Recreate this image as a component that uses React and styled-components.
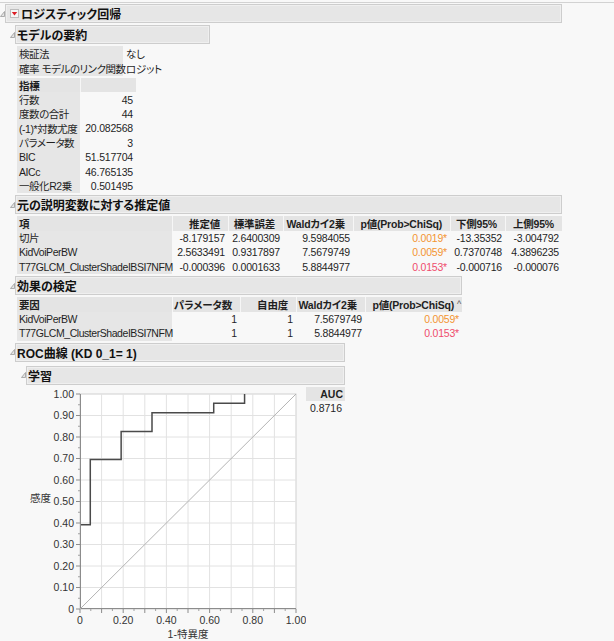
import React from 'react'
import styled, { createGlobalStyle } from 'styled-components'

const GlobalStyle = createGlobalStyle`
  body {
    margin: 0;
    background: #f8f8f8;
    font-family: "Liberation Sans", "Noto Sans CJK JP", sans-serif;
    font-feature-settings: "palt" 1;
    color: #1f1f1f;
  }
`

const Page = styled.div`
  padding-top: 2px;
  width: 614px;
  height: 641px;
  box-sizing: border-box;
  overflow: hidden;
`

const Rule = styled.div`
  height: 1px;
  background: #d2d2d2;
  margin-bottom: 1px;
`

const Node = styled.div`
  display: flex;
  flex-direction: column;
  gap: 2px;
  margin-top: ${p => p.$top || 0}px;
`

const Head = styled.div`
  display: flex;
  align-items: center;
`

const TitleBox = styled.div`
  box-sizing: border-box;
  width: ${p => p.$w}px;
  height: 19px;
  background: #e6e6e6;
  border: 1px solid #cdcdcd;
  box-shadow: inset 0 0 0 1px #efefef;
  display: flex;
  align-items: center;
  gap: 2px;
  padding-left: ${p => p.$pad ?? 1}px;
  font-size: 12px;
  font-weight: bold;
  color: #111;
  white-space: nowrap;
`

const Body = styled.div`
  display: flex;
  flex-direction: column;
  gap: 2px;
  padding-left: ${p => p.$indent}px;
`

const Grid = styled.div`
  display: grid;
  grid-template-columns: ${p => p.$cols};
  grid-auto-rows: ${p => p.$row}px;
  width: max-content;
  font-size: 10.5px;
  letter-spacing: -0.2px;
`

const Cell = styled.div`
  display: flex;
  align-items: center;
  white-space: nowrap;
  box-sizing: border-box;
  justify-content: ${p => (p.$right ? 'flex-end' : 'flex-start')};
  padding: ${p => (p.$right ? '0 3px 0 0' : '0 0 0 2px')};
  color: ${p => p.$color || 'inherit'};
`

const ValueCell = styled(Cell)`
  padding-left: 3px;
`

const LabelCell = styled(Cell)`
  background: #e6e6e6;
  letter-spacing: -0.45px;
`

const HeadCell = styled(Cell)`
  background: #e4e4e4;
  font-weight: bold;
  padding: ${p => (p.$right ? `0 ${p.$pr ?? 8}px 0 0` : '0 0 0 2px')};
  border-left: ${p => (p.$first ? 'none' : '1px solid #f6f6f6')};
`

const Caret = styled.span`
  font-weight: normal;
  font-size: 9px;
  margin-left: 3px;
  color: #555;
`

const ChartRow = styled.div`
  display: flex;
  align-items: flex-start;
`

const AucTable = styled.div`
  display: grid;
  grid-template-columns: 39px;
  grid-auto-rows: 14px;
  font-size: 10.5px;
`

const Toggle = () => (
  <svg width="5" height="6" viewBox="0 0 5 6">
    <polygon points="4.5,0.5 4.5,5.5 0.5,5.5" fill="#e4e4e4" stroke="#9a9a9a" strokeWidth="0.8" />
  </svg>
)

const MenuIcon = () => (
  <svg width="9" height="9" viewBox="0 0 9 9">
    <rect x="0.5" y="0.5" width="8" height="8" fill="#f6f6f6" stroke="#bdbdbd" />
    <polygon points="1.8,3 7.2,3 4.5,6.4" fill="#dc1e26" />
  </svg>
)

const ORANGE = '#f39532'
const RED = '#ef4d6d'

const summary = [
  ['行数', '45'],
  ['度数の合計', '44'],
  ['(-1)*対数尤度', '20.082568'],
  ['パラメータ数', '3'],
  ['BIC', '51.517704'],
  ['AICc', '46.765135'],
  ['一般化R2乗', '0.501495'],
]

const estimates = [
  ['切片', '-8.179157', '2.6400309', '9.5984055', '0.0019*', ORANGE, '-13.35352', '-3.004792'],
  ['KidVoiPerBW', '2.5633491', '0.9317897', '7.5679749', '0.0059*', ORANGE, '0.7370748', '4.3896235'],
  ['T77GLCM_ClusterShadeIBSI7NFM', '-0.000396', '0.0001633', '5.8844977', '0.0153*', RED, '-0.000716', '-0.000076'],
]

const effects = [
  ['KidVoiPerBW', '1', '1', '7.5679749', '0.0059*', ORANGE],
  ['T77GLCM_ClusterShadeIBSI7NFM', '1', '1', '5.8844977', '0.0153*', RED],
]

// ROC chart geometry (svg coords)
const L = 54
const T = 7
const W = 216
const H = 215
const px = v => L + v * W
const py = v => T + (1 - v) * H

const roc = [
  [0, 9 / 23], [1 / 21, 9 / 23], [1 / 21, 16 / 23], [4 / 21, 16 / 23],
  [4 / 21, 19 / 23], [7 / 21, 19 / 23], [7 / 21, 21 / 23], [13 / 21, 21 / 23],
  [13 / 21, 22 / 23], [16 / 21, 22 / 23], [16 / 21, 1],
]

const RocChart = () => {
  const tens = Array.from({ length: 11 }, (_, i) => i / 10)
  const halves = Array.from({ length: 10 }, (_, i) => i / 10 + 0.05)
  const lbl = v => (v === 0 ? '0' : v.toFixed(2))
  return (
    <svg width="280" height="254" style={{ display: 'block' }}>
      <rect x={L} y={T} width={W} height={H} fill="#fff" stroke="#cfcfcf" />
      {tens.slice(1, 10).map(v => (
        <g key={v} stroke="#e2e2e2" strokeWidth="1">
          <line x1={px(v)} y1={T} x2={px(v)} y2={T + H} />
          <line x1={L} y1={py(v)} x2={L + W} y2={py(v)} />
        </g>
      ))}
      <line x1={L + 0.5} y1={T} x2={L + 0.5} y2={T + H} stroke="#8c8c8c" />
      <line x1={L} y1={T + H - 0.5} x2={L + W} y2={T + H - 0.5} stroke="#8c8c8c" />
      {tens.map(v => (
        <g key={'t' + v} stroke="#8c8c8c">
          <line x1={L - 4} y1={py(v)} x2={L} y2={py(v)} />
          <line x1={px(v)} y1={T + H} x2={px(v)} y2={T + H + 4} />
        </g>
      ))}
      {halves.map(v => (
        <g key={'h' + v} stroke="#a0a0a0">
          <line x1={L - 2} y1={py(v)} x2={L} y2={py(v)} />
          <line x1={px(v)} y1={T + H} x2={px(v)} y2={T + H + 2} />
        </g>
      ))}
      <line x1={px(0)} y1={py(0)} x2={px(1)} y2={py(1)} stroke="#b4b4b4" strokeWidth="1" />
      <polyline
        points={roc.map(([x, y]) => `${px(x) + (x === 0 ? 1 : 0)},${py(y)}`).join(' ')}
        fill="none"
        stroke="#4a4a4a"
        strokeWidth="1.5"
      />
      <g fontSize="10.5" fill="#333" fontFamily="Liberation Sans, sans-serif">
        {tens.map(v => (
          <text key={'y' + v} x={L - 6} y={py(v) + 3.8} textAnchor="end">{lbl(v)}</text>
        ))}
        {[0, 0.2, 0.4, 0.6, 0.8, 1].map(v => (
          <text key={'x' + v} x={px(v)} y={T + H + 15} textAnchor="middle">{lbl(v)}</text>
        ))}
      </g>
      <g fontSize="10.5" fill="#333" fontFamily="Liberation Sans, Noto Sans CJK JP, sans-serif">
        <text x="4" y="115">感度</text>
        <text x={px(0.5)} y="251" textAnchor="middle">1-特異度</text>
      </g>
    </svg>
  )
}

const App = () => (
  <Page>
    <GlobalStyle />
    <Rule />
    <Node>
      <Head>
        <Toggle />
        <TitleBox $w={557} $pad={4}>
          <MenuIcon />
          ロジスティック回帰
        </TitleBox>
      </Head>
      <Body $indent={10}>
        <Node>
          <Head>
            <Toggle />
            <TitleBox $w={195}>モデルの要約</TitleBox>
          </Head>
          <Body $indent={7}>
            <Grid $cols="106px 60px" $row={15}>
              <LabelCell>検証法</LabelCell>
              <ValueCell>なし</ValueCell>
              <LabelCell>確率 モデルのリンク関数</LabelCell>
              <ValueCell>ロジット</ValueCell>
            </Grid>
            <Grid $cols="63px 56px" $row={14.4}>
              <HeadCell $first>指標</HeadCell>
              <HeadCell />
              {summary.map(([k, v]) => (
                <React.Fragment key={k}>
                  <LabelCell>{k}</LabelCell>
                  <Cell $right>{v}</Cell>
                </React.Fragment>
              ))}
            </Grid>
          </Body>
        </Node>

        <Node>
          <Head>
            <Toggle />
            <TitleBox $w={547}>元の説明変数に対する推定値</TitleBox>
          </Head>
          <Body $indent={7}>
            <Grid $cols="155px 56px 55px 70px 97px 55px 57px" $row={14.5}>
              <HeadCell $first>項</HeadCell>
              <HeadCell $right>推定値</HeadCell>
              <HeadCell $right>標準誤差</HeadCell>
              <HeadCell $right>Waldカイ2乗</HeadCell>
              <HeadCell $right>p値(Prob&gt;ChiSq)</HeadCell>
              <HeadCell $right>下側95%</HeadCell>
              <HeadCell $right>上側95%</HeadCell>
              {estimates.map(([term, est, se, wald, p, col, lo, hi]) => (
                <React.Fragment key={term}>
                  <LabelCell>{term}</LabelCell>
                  <Cell $right>{est}</Cell>
                  <Cell $right>{se}</Cell>
                  <Cell $right>{wald}</Cell>
                  <Cell $right $color={col}>{p}</Cell>
                  <Cell $right>{lo}</Cell>
                  <Cell $right>{hi}</Cell>
                </React.Fragment>
              ))}
            </Grid>
          </Body>
        </Node>

        <Node>
          <Head>
            <Toggle />
            <TitleBox $w={447}>効果の検定</TitleBox>
          </Head>
          <Body $indent={7}>
            <Grid $cols="155px 68px 56px 69px 97px" $row={14.5}>
              <HeadCell $first>要因</HeadCell>
              <HeadCell $right>パラメータ数</HeadCell>
              <HeadCell $right>自由度</HeadCell>
              <HeadCell $right>Waldカイ2乗</HeadCell>
              <HeadCell $right $pr={1}>
                p値(Prob&gt;ChiSq)<Caret>^</Caret>
              </HeadCell>
              {effects.map(([term, n, df, wald, p, col]) => (
                <React.Fragment key={term}>
                  <LabelCell>{term}</LabelCell>
                  <Cell $right>{n}</Cell>
                  <Cell $right>{df}</Cell>
                  <Cell $right>{wald}</Cell>
                  <Cell $right $color={col}>{p}</Cell>
                </React.Fragment>
              ))}
            </Grid>
          </Body>
        </Node>

        <Node>
          <Head>
            <Toggle />
            <TitleBox $w={330}>ROC曲線 (KD 0_1= 1)</TitleBox>
          </Head>
          <Body $indent={11}>
            <Node $top={2}>
              <Head>
                <Toggle />
                <TitleBox $w={319}>学習</TitleBox>
              </Head>
              <Body $indent={5}>
                <ChartRow>
                  <RocChart />
                  <AucTable>
                    <HeadCell $first $right $pr={2}>AUC</HeadCell>
                    <Cell $right>0.8716</Cell>
                  </AucTable>
                </ChartRow>
              </Body>
            </Node>
          </Body>
        </Node>
      </Body>
    </Node>
  </Page>
)

export default App
